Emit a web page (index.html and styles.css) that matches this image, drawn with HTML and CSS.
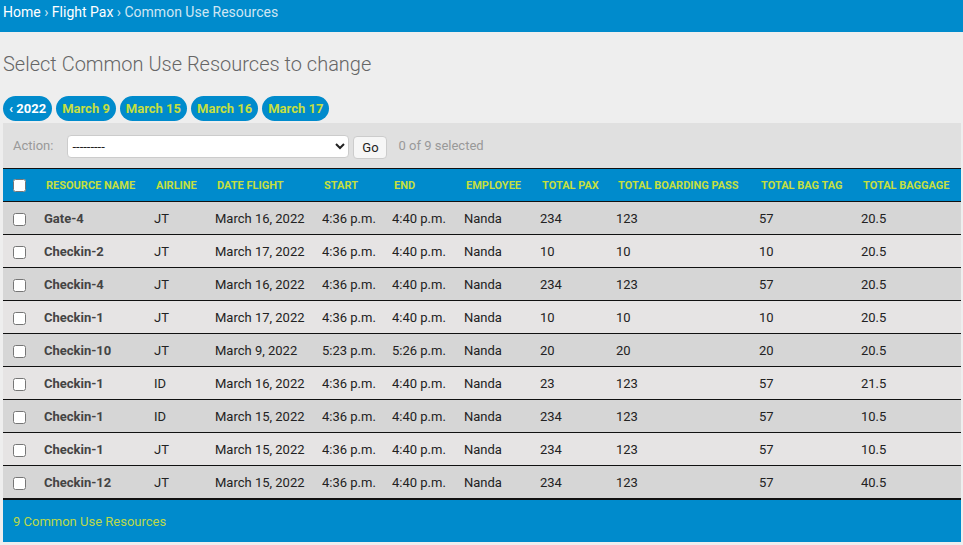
FILE: index.html
```html
<!DOCTYPE html>
<html lang="en">

<head>
    <meta charset="UTF-8">
    <meta name="viewport" content="width=device-width, initial-scale=1.0">
    <title>Select Common Use Resources to change</title>
    <link rel="stylesheet" href="styles.css">
</head>

<body>
    <!-- Breadcrumbs -->
    <div class="breadcrumbs">
        <a href="#">Home</a> &rsaquo; <a href="#">Flight Pax</a> &rsaquo; Common Use Resources
    </div>

    <div class="content">
        <h1>Select Common Use Resources to change</h1>

        <ul class="date-hierarchy">
            <li><a href="#" class="back">&lsaquo; 2022</a></li>
            <li><a href="#">March 9</a></li>
            <li><a href="#">March 15</a></li>
            <li><a href="#">March 16</a></li>
            <li><a href="#">March 17</a></li>
        </ul>

        <div class="changelist">
            <div class="actions">
                <label>Action:</label>
                <select>
                    <option>---------</option>
                    <option>Delete selected Common Use Resources</option>
                </select>
                <button class="go">Go</button>
                <span class="counter">0 of 9 selected</span>
            </div>

            <table class="result-list">
                <colgroup>
                    <col class="c-check">
                    <col class="c-name">
                    <col class="c-airline">
                    <col class="c-date">
                    <col class="c-start">
                    <col class="c-end">
                    <col class="c-emp">
                    <col class="c-pax">
                    <col class="c-pass">
                    <col class="c-tag">
                    <col class="c-bag">
                </colgroup>
                <thead>
                    <tr>
                        <th><input type="checkbox"></th>
                        <th>Resource name</th>
                        <th>Airline</th>
                        <th>Date flight</th>
                        <th>Start</th>
                        <th>End</th>
                        <th>Employee</th>
                        <th>Total pax</th>
                        <th>Total boarding pass</th>
                        <th>Total bag tag</th>
                        <th>Total baggage</th>
                    </tr>
                </thead>
                <tbody id="rows"></tbody>
            </table>

            <p class="paginator">9 Common Use Resources</p>
        </div>
    </div>

    <script>
        // rows of the change list
        const rows = [
            ["Gate-4", "JT", "March 16, 2022", "4:36 p.m.", "4:40 p.m.", "Nanda", "234", "123", "57", "20.5"],
            ["Checkin-2", "JT", "March 17, 2022", "4:36 p.m.", "4:40 p.m.", "Nanda", "10", "10", "10", "20.5"],
            ["Checkin-4", "JT", "March 16, 2022", "4:36 p.m.", "4:40 p.m.", "Nanda", "234", "123", "57", "20.5"],
            ["Checkin-1", "JT", "March 17, 2022", "4:36 p.m.", "4:40 p.m.", "Nanda", "10", "10", "10", "20.5"],
            ["Checkin-10", "JT", "March 9, 2022", "5:23 p.m.", "5:26 p.m.", "Nanda", "20", "20", "20", "20.5"],
            ["Checkin-1", "ID", "March 16, 2022", "4:36 p.m.", "4:40 p.m.", "Nanda", "23", "123", "57", "21.5"],
            ["Checkin-1", "ID", "March 15, 2022", "4:36 p.m.", "4:40 p.m.", "Nanda", "234", "123", "57", "10.5"],
            ["Checkin-1", "JT", "March 15, 2022", "4:36 p.m.", "4:40 p.m.", "Nanda", "234", "123", "57", "10.5"],
            ["Checkin-12", "JT", "March 15, 2022", "4:36 p.m.", "4:40 p.m.", "Nanda", "234", "123", "57", "40.5"],
        ];

        let tbody = document.querySelector("#rows");
        rows.forEach((row, i) => {
            let tr = document.createElement("tr");
            tr.className = i % 2 === 0 ? "row1" : "row2";
            let html = '<td><input type="checkbox"></td>';
            row.forEach((value, j) => {
                html += j === 0 ? `<th><a href="#">${value}</a></th>` : `<td>${value}</td>`;
            });
            tr.innerHTML = html;
            tbody.appendChild(tr);
        });
    </script>
</body>

</html>
```

FILE: styles.css
```css
body {
    margin: 0;
    background-color: #eeeeee;
    font-family: Roboto, "Liberation Sans", sans-serif;
    font-size: 13px;
    color: #222;
}

a {
    text-decoration: none;
}

.breadcrumbs {
    background-color: #008bcc;
    color: #cfe6f3;
    font-size: 14px;
    height: 32px;
    line-height: 24px;
    padding: 0 3px;
    box-sizing: border-box;
}

.breadcrumbs a {
    color: #fff;
}

.content {
    padding: 0 2px 0 3px;
}

h1 {
    margin: 20px 0 0;
    font-size: 20px;
    font-weight: 300;
    color: #666;
    line-height: 24px;
}

.date-hierarchy {
    list-style: none;
    margin: 20px 0 2px;
    padding: 0;
    display: flex;
    gap: 4px;
}

.date-hierarchy a {
    display: block;
    background-color: #008bcc;
    color: #c5df3f;
    font-weight: bold;
    font-size: 13px;
    line-height: 25px;
    padding: 0 6px;
    border-radius: 13px;
}

.date-hierarchy a.back {
    color: #fff;
}

.changelist {
    background-color: #e0e0e0;
}

.actions {
    display: flex;
    align-items: center;
    height: 45px;
    padding: 0 10px;
    color: #999;
}

.actions label {
    margin-right: 14px;
}

.actions select {
    width: 282px;
    height: 23px;
    margin: 2px 0 0;
    border: 1px solid #ccc;
    border-radius: 4px;
    background-color: #fff;
    font-family: inherit;
    font-size: 13px;
    color: #222;
}

.go {
    margin: 3px 0 0 4px;
    width: 34px;
    height: 23px;
    border: 1px solid #ccc;
    border-radius: 4px;
    background-color: #f6f6f6;
    font-family: inherit;
    font-size: 13px;
    color: #222;
    padding: 0;
}

.counter {
    margin-left: 11px;
}

.result-list {
    width: 100%;
    border-collapse: collapse;
    table-layout: fixed;
}

.c-check { width: 33px; }
.c-name { width: 110px; }
.c-airline { width: 61px; }
.c-date { width: 107px; }
.c-start { width: 70px; }
.c-end { width: 72px; }
.c-emp { width: 76px; }
.c-pax { width: 76px; }
.c-pass { width: 143px; }
.c-tag { width: 102px; }

.result-list thead th {
    background-color: #008bcc;
    color: #c5df3f;
    font-size: 11px;
    font-weight: bold;
    text-transform: uppercase;
    text-align: left;
    height: 33px;
    padding: 0 0 0 10px;
    border-top: 1px solid #111;
    border-bottom: 1px solid #111;
    box-sizing: border-box;
    white-space: nowrap;
}

.result-list td,
.result-list tbody th {
    text-align: left;
    padding: 0 0 0 8px;
    height: 32px;
    border-bottom: 1px solid #111;
    white-space: nowrap;
}

.result-list tbody th a {
    color: #444;
    font-weight: bold;
}

.result-list td:first-child,
.result-list thead th:first-child {
    padding-left: 10px;
}

.result-list input[type="checkbox"] {
    margin: 0;
    width: 13px;
    height: 13px;
    vertical-align: middle;
}

.row1 {
    background-color: #d6d6d6;
}

.row2 {
    background-color: #e6e4e4;
}

.paginator {
    margin: 0;
    background-color: #008bcc;
    color: #bcd94a;
    height: 42px;
    line-height: 44px;
    padding: 0 10px;
    border-top: 1px solid #111;
}
```
